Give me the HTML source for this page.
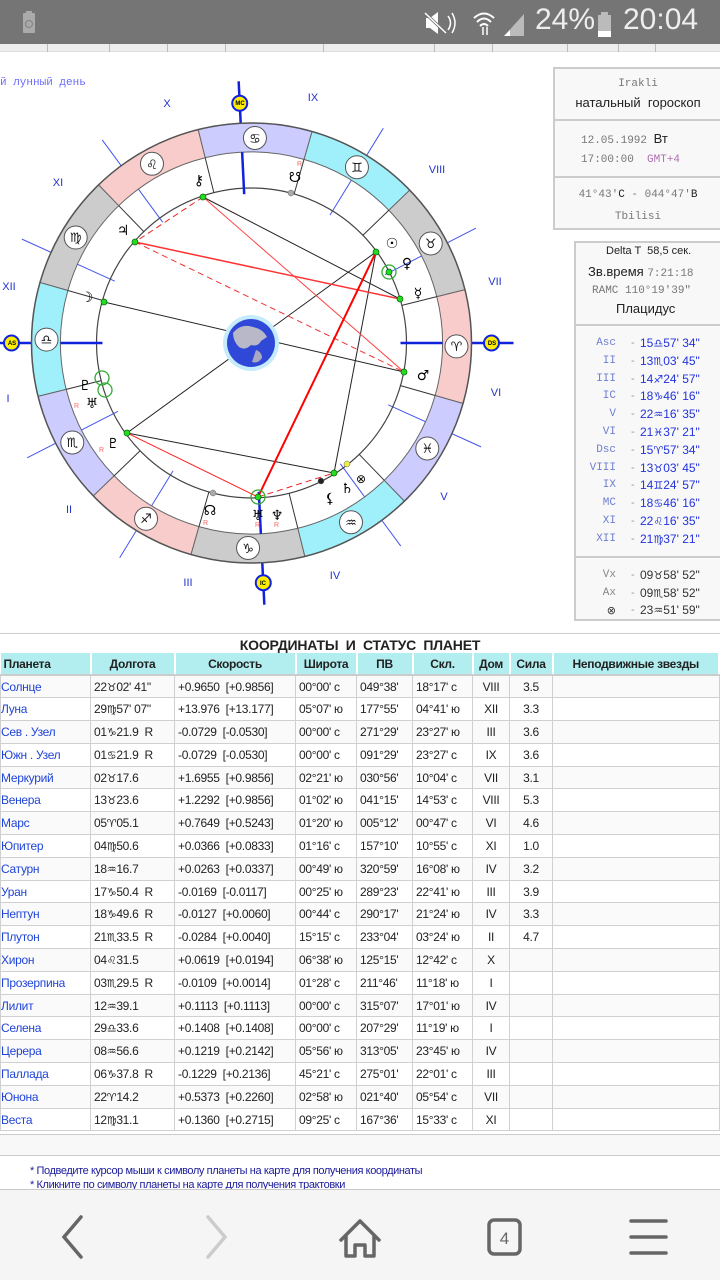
<!DOCTYPE html>
<html><head><meta charset="utf-8">
<style>
*{margin:0;padding:0;box-sizing:border-box}
body{width:720px;height:1280px;overflow:hidden;background:#fff;position:relative;font-family:"Liberation Sans","DejaVu Sans",sans-serif;color:#222}
.abs{position:absolute}
#sb{left:0;top:0;width:720px;height:44px;background:#757575;color:#e8e8e8}
#strip{left:0;top:44px;width:720px;height:8px;background:#eee;border-bottom:1px solid #ddd}
#strip i{position:absolute;top:0;width:1px;height:8px;background:#bbb}
.mono{font-family:"Liberation Mono",monospace}
#b1{left:553px;top:67px;width:170px;height:163px;border:2px solid #ccc;background:#f8f8f8;text-align:center}
#b2{left:574px;top:241px;width:150px;height:380px;border:2px solid #ccc;border-right:none;background:#f8f8f8}
.hr{position:absolute;left:0;right:0;height:2px;background:#ccc}
.hl{position:absolute;left:0;width:146px;font-size:12px;height:17px;line-height:17px;white-space:nowrap}
.hl .l{position:absolute;right:106px;font-family:"Liberation Mono",monospace;font-size:11px;color:#6f7fd0}
.hl .d{position:absolute;left:55px;color:#999;font-size:11px}
.hl .v{position:absolute;left:64px;color:#2233dd}
#title{left:0;top:633px;width:720px;height:20px;border-top:1px solid #ccc;text-align:center;font-weight:bold;font-size:14px;line-height:22px;letter-spacing:-0.2px}
table{position:absolute;left:0;top:653px;width:720px;border-collapse:collapse;table-layout:fixed;font-size:12px}
td,th{border:1px solid #d0d0d0;height:22.8px;padding:0 3px;white-space:nowrap;overflow:hidden;letter-spacing:-0.3px}
th{background:#b2eef0;font-weight:bold;height:22px;border-color:#fff #fff #ccc #fff;border-width:0 2px 2px 0}
tr:nth-child(even) td{background:#fafafa}
td:first-child{color:#1f44d8;padding-left:0}
td:nth-child(7),td:nth-child(8){text-align:center}
.sg{font-family:"DejaVu Sans",sans-serif;font-size:11px}
#nav{left:0;top:1189px;width:720px;height:91px;background:#f5f5f5;border-top:1px solid #c8c8c8}
</style></head><body>

<div id="sb" class="abs">
 <svg class="abs" style="left:20px;top:10px" width="20" height="26"><rect x="3" y="3" width="12" height="20" rx="1" fill="#aaa"/><rect x="6" y="1" width="6" height="3" fill="#aaa"/><circle cx="9" cy="14" r="3.5" fill="none" stroke="#888" stroke-width="1.3"/></svg>
 <svg class="abs" style="left:422px;top:10px" width="40" height="26"><path d="M4 8 L8 8 L16 2 L16 24 L8 18 L4 18 Z" fill="#fff"/><path d="M3 3 L24 23" stroke="#757575" stroke-width="3"/><path d="M3 3 L24 23" stroke="#fff" stroke-width="1.5"/><path d="M26 6 q5 7 0 14 M30 3 q6 10 0 20" stroke="#fff" fill="none" stroke-width="1.5"/></svg>
 <svg class="abs" style="left:472px;top:10px" width="26" height="26"><path d="M2 8 Q12 -1 22 8 M5 12 Q12 5 19 12 M8 16 Q12 12 16 16" stroke="#fff" stroke-width="2" fill="none"/><path d="M11 17 v8 M15 17 v8" stroke="#fff" stroke-width="1.5"/></svg>
 <svg class="abs" style="left:502px;top:12px" width="24" height="24"><path d="M2 24 L22 24 L22 2 Z" fill="#bbb"/><path d="M2 24 L8 24 L8 18 Z" fill="#fff"/></svg>
 <div class="abs" style="left:535px;top:3px;font-size:30px;color:#eee">24%</div>
 <svg class="abs" style="left:597px;top:12px" width="16" height="26"><rect x="1" y="3" width="13" height="22" fill="#bbb"/><rect x="4" y="0" width="7" height="3" fill="#bbb"/><rect x="1" y="19" width="13" height="6" fill="#fff"/></svg>
 <div class="abs" style="left:623px;top:3px;font-size:30px;color:#eee">20:04</div>
</div>
<div id="strip" class="abs"><i style="left:47px"></i><i style="left:109px"></i><i style="left:167px"></i><i style="left:225px"></i><i style="left:323px"></i><i style="left:434px"></i><i style="left:492px"></i><i style="left:567px"></i><i style="left:618px"></i><i style="left:655px"></i></div>

<div class="abs mono" style="left:0;top:77px;font-size:11px;color:#6a6aff">й лунный день</div>

<svg class="abs" id="chart" style="left:0;top:0" width="540" height="620" font-family="DejaVu Sans,sans-serif">
 <g id="g0"></g>
 <g font-family="Liberation Sans,sans-serif" font-size="11" fill="#2233cc" text-anchor="middle">
  <text x="167" y="107">X</text><text x="313" y="101">IX</text><text x="58" y="186">XI</text><text x="437" y="173">VIII</text>
  <text x="9" y="290">XII</text><text x="495" y="285">VII</text><text x="8" y="402">I</text><text x="496" y="396">VI</text>
  <text x="69" y="513">II</text><text x="444" y="500">V</text><text x="188" y="586">III</text><text x="335" y="579">IV</text>
 </g>
 <g font-size="13" text-anchor="middle" fill="#111">
  <text x="456.5" y="351">♈</text><text x="430.7" y="248">♉</text><text x="356.9" y="172">♊</text><text x="254.9" y="143">♋</text>
  <text x="152" y="169">♌</text><text x="75.7" y="242">♍</text><text x="46.5" y="344">♎</text><text x="72.3" y="447">♏</text>
  <text x="146.1" y="523">♐</text><text x="248.1" y="553">♑</text><text x="351" y="527">♒</text><text x="427.3" y="453">♓</text>
 </g>
 <g font-size="14" text-anchor="middle" fill="#000" font-weight="bold">
  <text x="392" y="248">☉</text><text x="407" y="268">♀</text><text x="418" y="298">☿</text><text x="423" y="380">♂</text>
  <text x="347" y="493">♄</text><text x="361" y="483" font-weight="normal" font-size="12">⊗</text><text x="330" y="503">⚸</text>
  <text x="258" y="520">♅</text><text x="277" y="520">♆</text><text x="210" y="515">☊</text><text x="113" y="448">♇</text>
  <text x="85" y="390">♇</text><text x="92" y="408">♅</text><text x="87" y="302">☽</text><text x="123" y="235">♃</text>
  <text x="199" y="185">⚷</text><text x="295" y="182">☋</text>
 </g>
 <g font-size="7" fill="#f66" font-family="Liberation Sans,sans-serif">
  <text x="297" y="166">R</text><text x="74" y="408">R</text><text x="99" y="452">R</text><text x="203" y="525">R</text><text x="255" y="527">R</text><text x="274" y="527">R</text>
 </g>
 <g font-size="6" font-family="Liberation Sans,sans-serif" font-weight="bold" text-anchor="middle" fill="#000">
  <text x="12" y="345">AS</text><text x="492" y="345">DS</text><text x="240" y="105">MC</text><text x="263" y="585">IC</text>
 </g>
</svg>

<div id="b1" class="abs">
 <div class="mono" style="position:absolute;top:9px;width:100%;font-size:11px;color:#777">Irakli</div>
 <div style="position:absolute;top:26px;width:100%;font-size:13px">натальный&nbsp; гороскоп</div>
 <div class="hr" style="top:50px"></div>
 <div style="position:absolute;top:62px;left:26px;font-size:13px"><span class="mono" style="font-size:11px;color:#777">12.05.1992 </span>Вт</div>
 <div class="mono" style="position:absolute;top:85px;left:26px;font-size:11px;color:#777">17:00:00 <span style="color:#b070b0">&nbsp;GMT+4</span></div>
 <div class="hr" style="top:107px"></div>
 <div style="position:absolute;top:120px;width:100%;font-size:11px" class="mono"><span style="color:#777">41°43'</span>С <span style="color:#777">- 044°47'</span>В</div>
 <div class="mono" style="position:absolute;top:142px;width:100%;font-size:11px;color:#777">Tbilisi</div>
</div>

<div id="b2" class="abs">
 <div style="position:absolute;top:2px;left:30px;font-size:11px">Delta T &nbsp;58,5 сек.</div>
 <div style="position:absolute;top:21px;left:12px;font-size:13px;white-space:nowrap">Зв.время <span class="mono" style="font-size:11px;color:#777">7:21:18</span></div>
 <div class="mono" style="position:absolute;top:42px;left:16px;font-size:11px;color:#777;white-space:nowrap">RAMC 110°19'39"</div>
 <div style="position:absolute;top:58px;left:40px;font-size:13px">Плацидус</div>
 <div class="hr" style="top:81px"></div>
 <div class="hl" style="top:92px"><span class="l">Asc</span><span class="d">-</span><span class="v">15<span class="sg">♎</span>57' 34"</span></div>
 <div class="hl" style="top:109.8px"><span class="l">II</span><span class="d">-</span><span class="v">13<span class="sg">♏</span>03' 45"</span></div>
 <div class="hl" style="top:127.6px"><span class="l">III</span><span class="d">-</span><span class="v">14<span class="sg">♐</span>24' 57"</span></div>
 <div class="hl" style="top:145.4px"><span class="l">IC</span><span class="d">-</span><span class="v">18<span class="sg">♑</span>46' 16"</span></div>
 <div class="hl" style="top:163.2px"><span class="l">V</span><span class="d">-</span><span class="v">22<span class="sg">♒</span>16' 35"</span></div>
 <div class="hl" style="top:181px"><span class="l">VI</span><span class="d">-</span><span class="v">21<span class="sg">♓</span>37' 21"</span></div>
 <div class="hl" style="top:198.8px"><span class="l">Dsc</span><span class="d">-</span><span class="v">15<span class="sg">♈</span>57' 34"</span></div>
 <div class="hl" style="top:216.6px"><span class="l">VIII</span><span class="d">-</span><span class="v">13<span class="sg">♉</span>03' 45"</span></div>
 <div class="hl" style="top:234.4px"><span class="l">IX</span><span class="d">-</span><span class="v">14<span class="sg">♊</span>24' 57"</span></div>
 <div class="hl" style="top:252.2px"><span class="l">MC</span><span class="d">-</span><span class="v">18<span class="sg">♋</span>46' 16"</span></div>
 <div class="hl" style="top:270px"><span class="l">XI</span><span class="d">-</span><span class="v">22<span class="sg">♌</span>16' 35"</span></div>
 <div class="hl" style="top:287.8px"><span class="l">XII</span><span class="d">-</span><span class="v">21<span class="sg">♍</span>37' 21"</span></div>
 <div class="hr" style="top:313px"></div>
 <div class="hl" style="top:324px"><span class="l" style="color:#888">Vx</span><span class="d">-</span><span class="v" style="color:#333">09<span class="sg">♉</span>58' 52"</span></div>
 <div class="hl" style="top:341.5px"><span class="l" style="color:#888">Ax</span><span class="d">-</span><span class="v" style="color:#333">09<span class="sg">♏</span>58' 52"</span></div>
 <div class="hl" style="top:359px"><span class="l" style="color:#333;font-family:'DejaVu Sans'">⊗</span><span class="d">-</span><span class="v" style="color:#333">23<span class="sg">♒</span>51' 59"</span></div>
</div>

<div id="title" class="abs">КООРДИНАТЫ&nbsp; И&nbsp; СТАТУС&nbsp; ПЛАНЕТ</div>
<table>
<colgroup><col style="width:90px"><col style="width:84px"><col style="width:121px"><col style="width:61px"><col style="width:56px"><col style="width:60px"><col style="width:37px"><col style="width:43px"><col></colgroup>
<tr><th style="text-align:left">Планета</th><th>Долгота</th><th>Скорость</th><th>Широта</th><th>ПВ</th><th>Скл.</th><th>Дом</th><th>Сила</th><th>Неподвижные звезды</th></tr>
<tr><td>Солнце</td><td>22<span class="sg">♉</span>02' 41"</td><td>+0.9650 &nbsp;[+0.9856]</td><td>00°00' с</td><td>049°38'</td><td>18°17' с</td><td>VIII</td><td>3.5</td><td></td></tr>
<tr><td>Луна</td><td>29<span class="sg">♍</span>57' 07"</td><td>+13.976 &nbsp;[+13.177]</td><td>05°07' ю</td><td>177°55'</td><td>04°41' ю</td><td>XII</td><td>3.3</td><td></td></tr>
<tr><td>Сев . Узел</td><td>01<span class="sg">♑</span>21.9 &nbsp;R</td><td>-0.0729 &nbsp;[-0.0530]</td><td>00°00' с</td><td>271°29'</td><td>23°27' ю</td><td>III</td><td>3.6</td><td></td></tr>
<tr><td>Южн . Узел</td><td>01<span class="sg">♋</span>21.9 &nbsp;R</td><td>-0.0729 &nbsp;[-0.0530]</td><td>00°00' с</td><td>091°29'</td><td>23°27' с</td><td>IX</td><td>3.6</td><td></td></tr>
<tr><td>Меркурий</td><td>02<span class="sg">♉</span>17.6</td><td>+1.6955 &nbsp;[+0.9856]</td><td>02°21' ю</td><td>030°56'</td><td>10°04' с</td><td>VII</td><td>3.1</td><td></td></tr>
<tr><td>Венера</td><td>13<span class="sg">♉</span>23.6</td><td>+1.2292 &nbsp;[+0.9856]</td><td>01°02' ю</td><td>041°15'</td><td>14°53' с</td><td>VIII</td><td>5.3</td><td></td></tr>
<tr><td>Марс</td><td>05<span class="sg">♈</span>05.1</td><td>+0.7649 &nbsp;[+0.5243]</td><td>01°20' ю</td><td>005°12'</td><td>00°47' с</td><td>VI</td><td>4.6</td><td></td></tr>
<tr><td>Юпитер</td><td>04<span class="sg">♍</span>50.6</td><td>+0.0366 &nbsp;[+0.0833]</td><td>01°16' с</td><td>157°10'</td><td>10°55' с</td><td>XI</td><td>1.0</td><td></td></tr>
<tr><td>Сатурн</td><td>18<span class="sg">♒</span>16.7</td><td>+0.0263 &nbsp;[+0.0337]</td><td>00°49' ю</td><td>320°59'</td><td>16°08' ю</td><td>IV</td><td>3.2</td><td></td></tr>
<tr><td>Уран</td><td>17<span class="sg">♑</span>50.4 &nbsp;R</td><td>-0.0169 &nbsp;[-0.0117]</td><td>00°25' ю</td><td>289°23'</td><td>22°41' ю</td><td>III</td><td>3.9</td><td></td></tr>
<tr><td>Нептун</td><td>18<span class="sg">♑</span>49.6 &nbsp;R</td><td>-0.0127 &nbsp;[+0.0060]</td><td>00°44' с</td><td>290°17'</td><td>21°24' ю</td><td>IV</td><td>3.3</td><td></td></tr>
<tr><td>Плутон</td><td>21<span class="sg">♏</span>33.5 &nbsp;R</td><td>-0.0284 &nbsp;[+0.0040]</td><td>15°15' с</td><td>233°04'</td><td>03°24' ю</td><td>II</td><td>4.7</td><td></td></tr>
<tr><td>Хирон</td><td>04<span class="sg">♌</span>31.5</td><td>+0.0619 &nbsp;[+0.0194]</td><td>06°38' ю</td><td>125°15'</td><td>12°42' с</td><td>X</td><td></td><td></td></tr>
<tr><td>Прозерпина</td><td>03<span class="sg">♏</span>29.5 &nbsp;R</td><td>-0.0109 &nbsp;[+0.0014]</td><td>01°28' с</td><td>211°46'</td><td>11°18' ю</td><td>I</td><td></td><td></td></tr>
<tr><td>Лилит</td><td>12<span class="sg">♒</span>39.1</td><td>+0.1113 &nbsp;[+0.1113]</td><td>00°00' с</td><td>315°07'</td><td>17°01' ю</td><td>IV</td><td></td><td></td></tr>
<tr><td>Селена</td><td>29<span class="sg">♎</span>33.6</td><td>+0.1408 &nbsp;[+0.1408]</td><td>00°00' с</td><td>207°29'</td><td>11°19' ю</td><td>I</td><td></td><td></td></tr>
<tr><td>Церера</td><td>08<span class="sg">♒</span>56.6</td><td>+0.1219 &nbsp;[+0.2142]</td><td>05°56' ю</td><td>313°05'</td><td>23°45' ю</td><td>IV</td><td></td><td></td></tr>
<tr><td>Паллада</td><td>06<span class="sg">♑</span>37.8 &nbsp;R</td><td>-0.1229 &nbsp;[+0.2136]</td><td>45°21' с</td><td>275°01'</td><td>22°01' с</td><td>III</td><td></td><td></td></tr>
<tr><td>Юнона</td><td>22<span class="sg">♈</span>14.2</td><td>+0.5373 &nbsp;[+0.2260]</td><td>02°58' ю</td><td>021°40'</td><td>05°54' с</td><td>VII</td><td></td><td></td></tr>
<tr><td>Веста</td><td>12<span class="sg">♍</span>31.1</td><td>+0.1360 &nbsp;[+0.2715]</td><td>09°25' с</td><td>167°36'</td><td>15°33' с</td><td>XI</td><td></td><td></td></tr>
</table>
<div class="abs" style="left:0;top:1134px;width:720px;height:22px;background:#f8f8f8;border-top:1px solid #ccc;border-bottom:1px solid #ccc"></div>
<div class="abs" style="left:30px;top:1164px;font-size:11px;color:#1a1a9a;line-height:14px;letter-spacing:-0.4px">* Подведите курсор мыши к символу планеты на карте для получения координаты<br>* Кликните по символу планеты на карте для получения трактовки</div>

<div id="nav" class="abs">
 <svg width="720" height="91">
  <path d="M81 27 L64 47 L81 67" stroke="#666" stroke-width="3.5" fill="none" stroke-linecap="round"/>
  <path d="M208 27 L225 47 L208 67" stroke="#ccc" stroke-width="3.5" fill="none" stroke-linecap="round"/>
  <path d="M341 50 L360 31 L379 50 M346 46 V66 H355 V55 H365 V66 H374 V46" stroke="#666" stroke-width="3.5" fill="none" stroke-linejoin="round" stroke-linecap="round"/>
  <rect x="489" y="30" width="31" height="34" rx="5" stroke="#666" stroke-width="3.5" fill="none"/>
  <text x="504.5" y="54" text-anchor="middle" font-size="17" fill="#666" font-family="Liberation Sans">4</text>
  <path d="M631 31 H666 M631 47 H666 M631 63 H666" stroke="#666" stroke-width="3.5" stroke-linecap="round"/>
 </svg>
</div>

<script>
(function(){
var NS="http://www.w3.org/2000/svg",g=document.getElementById("g0");
var cx=251.5,cy=343,R0=220,R1=191,R2=155,A=195.96;
function th(L){return (180+L-A)*Math.PI/180;}
function pt(t,r){return [cx+r*Math.cos(t),cy-r*Math.sin(t)];}
function el(n,a){var e=document.createElementNS(NS,n);for(var k in a)e.setAttribute(k,a[k]);g.appendChild(e);return e;}
function line(t,r1,r2,c,w,extra){var p=pt(t,r1),q=pt(t,r2);var a={x1:p[0],y1:p[1],x2:q[0],y2:q[1],stroke:c,"stroke-width":w};for(var k in extra)a[k]=extra[k];el("line",a);}
// blue cusp lines (non-angular)
[223.06,254.42,322.28,351.62,43.06,74.42,142.28,171.62].forEach(function(L){line(th(L),150,252,"#4455ee",1);});
// axes outside
[[195.96,"AS"],[15.96,"DS"],[108.77,"MC"],[288.77,"IC"]].forEach(function(a){var t=th(a[0]);line(t,R0,262,"#1122dd",2.5);});
// zodiac ring
var cols=["#f9cccc","#cccccc","#9ff0fb","#ccccff"];
for(var k=0;k<12;k++){var t1=th(30*k),t2=th(30*k+30);var a=pt(t1,R0),b=pt(t2,R0),c=pt(t2,R1),d=pt(t1,R1);
 el("path",{d:"M"+a+" A"+R0+" "+R0+" 0 0 0 "+b+" L"+c+" A"+R1+" "+R1+" 0 0 1 "+d+"Z",fill:cols[k%4],stroke:"#666","stroke-width":1});
 var m=pt(th(30*k+15),205);el("circle",{cx:m[0],cy:m[1],r:11.5,fill:"#fff",stroke:"#555","stroke-width":1});}
el("circle",{cx:cx,cy:cy,r:R0,fill:"none",stroke:"#555","stroke-width":1.5});
el("circle",{cx:cx,cy:cy,r:R2,fill:"none",stroke:"#444","stroke-width":1.2});
for(var k=0;k<12;k++)line(th(30*k),R2,R1,"#333",1);
// angular thick lines inside
[195.96,15.96,108.77,288.77].forEach(function(L){line(th(L),149,R1,"#1122dd",2.5);});
// axis circles
[[195.96],[15.96],[108.77],[288.77]].forEach(function(a){var p=pt(th(a[0]),240);el("circle",{cx:p[0],cy:p[1],r:7.5,fill:"#ffee00",stroke:"#1122dd","stroke-width":2});});
// aspects
function L2(a,b,c,w,dash){var at={x1:a[0],y1:a[1],x2:b[0],y2:b[1],stroke:c,"stroke-width":w};if(dash)at["stroke-dasharray"]="6,4";el("line",at);}
var Su=[376,252],Mo=[104,302],Me=[400,299],Ve=[389,272],Ma=[404,372],Ju=[135,242],Sa=[334,473],Ur=[258,497],Pl=[127,433],Ch=[203,197];
L2(Mo,Ma,"#222",1);L2(Su,Pl,"#222",1);L2(Ch,Me,"#222",1);L2(Pl,Sa,"#222",1);L2(Su,Sa,"#222",1);
L2(Ch,Ju,"#e22",1,1);L2(Ju,Me,"#f33",1.5);L2(Ju,Ma,"#e33",1,1);L2(Ch,Ma,"#f44",1);L2(Su,Ur,"#f00",2);L2(Pl,Ur,"#f22",1);L2(Ur,Sa,"#e22",1,1);
// earth
el("circle",{cx:251,cy:343,r:28,fill:"#c6ecfb"});el("circle",{cx:251,cy:343,r:24,fill:"#2f48d8"});
el("path",{d:"M233 333 q8 -10 20 -6 q10 2 14 10 l-6 4 q-3 6 -10 4 q-6 6 -12 2 q-6 -6 -6 -14z",fill:"#b8b8c8"});
el("path",{d:"M256 350 q6 2 6 8 q-4 6 -10 4z",fill:"#a8a8c0"});
// dots
[Su,Mo,Me,Ma,Ju,Sa,Pl,Ch,Ve,Ur].forEach(function(p){el("circle",{cx:p[0],cy:p[1],r:3,fill:"#22dd22",stroke:"#060","stroke-width":0.7});});
[[291,193,"#aaa"],[213,493,"#aaa"],[321,481,"#222"],[347,464,"#ee4"]].forEach(function(p){el("circle",{cx:p[0],cy:p[1],r:3,fill:p[2],stroke:"#666","stroke-width":0.5});});
[[389,272],[258,497],[102,378],[105,390]].forEach(function(p){el("circle",{cx:p[0],cy:p[1],r:7,fill:"none",stroke:"#3a3","stroke-width":1.3});});
})();
</script>
</body></html>
